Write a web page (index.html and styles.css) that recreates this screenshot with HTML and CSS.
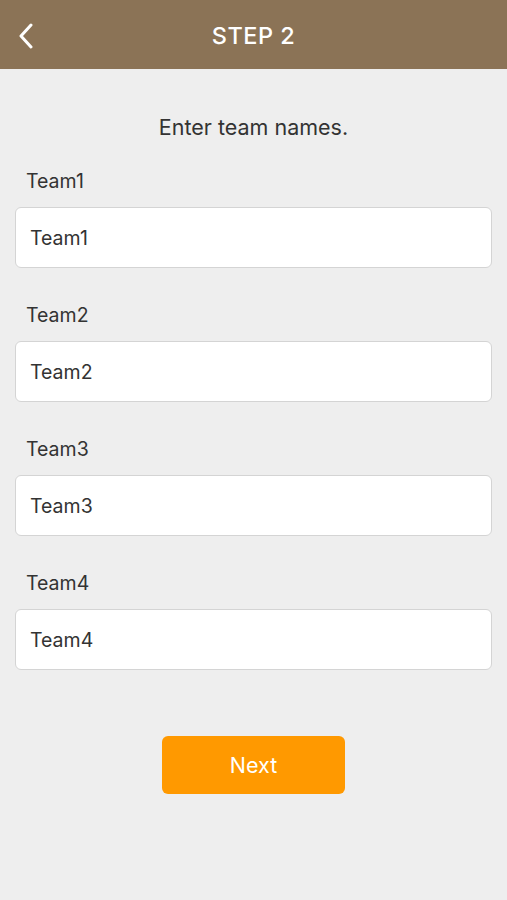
FILE: index.html
```html
<!DOCTYPE html>
<html>
<head>
<meta charset="utf-8">
<link rel="stylesheet" href="styles.css">
</head>
<body>
<header class="bar">
  <button class="back" aria-label="Back">
    <svg width="16" height="26" viewBox="0 0 16 26"><path d="M13 2 L3 13 L13 24" fill="none" stroke="#fff" stroke-width="3" stroke-linecap="round" stroke-linejoin="round"/></svg>
  </button>
  <h1 class="title">STEP 2</h1>
</header>
<main class="content">
  <p class="lead">Enter team names.</p>
  <div class="field"><label class="label">Team1</label><div class="input">Team1</div></div>
  <div class="field"><label class="label">Team2</label><div class="input">Team2</div></div>
  <div class="field"><label class="label">Team3</label><div class="input">Team3</div></div>
  <div class="field"><label class="label">Team4</label><div class="input">Team4</div></div>
  <div class="actions"><button class="next">Next</button></div>
</main>
</body>
</html>
```
FILE: styles.css
```css
html, body { margin: 0; padding: 0; }
body {
  width: 507px;
  height: 900px;
  background: #eeeeee;
  font-family: Inter, "Noto Sans", sans-serif;
  color: #333;
  overflow: hidden;
}
.bar {
  height: 69px;
  background: #8b7356;
  display: flex;
  align-items: center;
  justify-content: center;
  position: relative;
}
.back {
  position: absolute;
  left: 18px;
  top: 23px;
  background: none;
  border: 0;
  padding: 0;
  display: flex;
}
.title {
  margin: 0;
  color: #fff;
  font-size: 23.5px;
  font-weight: 500;
  letter-spacing: 0.5px;
  margin-top: 2px;
}
.content {
  padding: 0 15px;
}
.lead {
  margin: 44px 0 0;
  text-align: center;
  font-size: 21.5px;
  line-height: 28px;
  color: #333;
}
.field { display: flex; flex-direction: column; }
.label {
  margin: 28px 0 0 11px;
  font-size: 19.5px;
  line-height: 24px;
  color: #333;
}
.field + .field .label { margin-top: 35px; }
.input {
  margin-top: 14px;
  height: 59px;
  background: #fff;
  border: 1px solid #d4d4d4;
  border-radius: 6px;
  display: flex;
  align-items: center;
  padding-left: 14px;
  font-size: 19.5px;
  color: #333;
}
.actions {
  display: flex;
  justify-content: center;
  margin-top: 66px;
}
.next {
  width: 183px;
  height: 58px;
  background: #ff9900;
  border: 0;
  border-radius: 6px;
  color: #fff;
  font-family: Inter, "Noto Sans", sans-serif;
  font-size: 21.5px;
}
```
